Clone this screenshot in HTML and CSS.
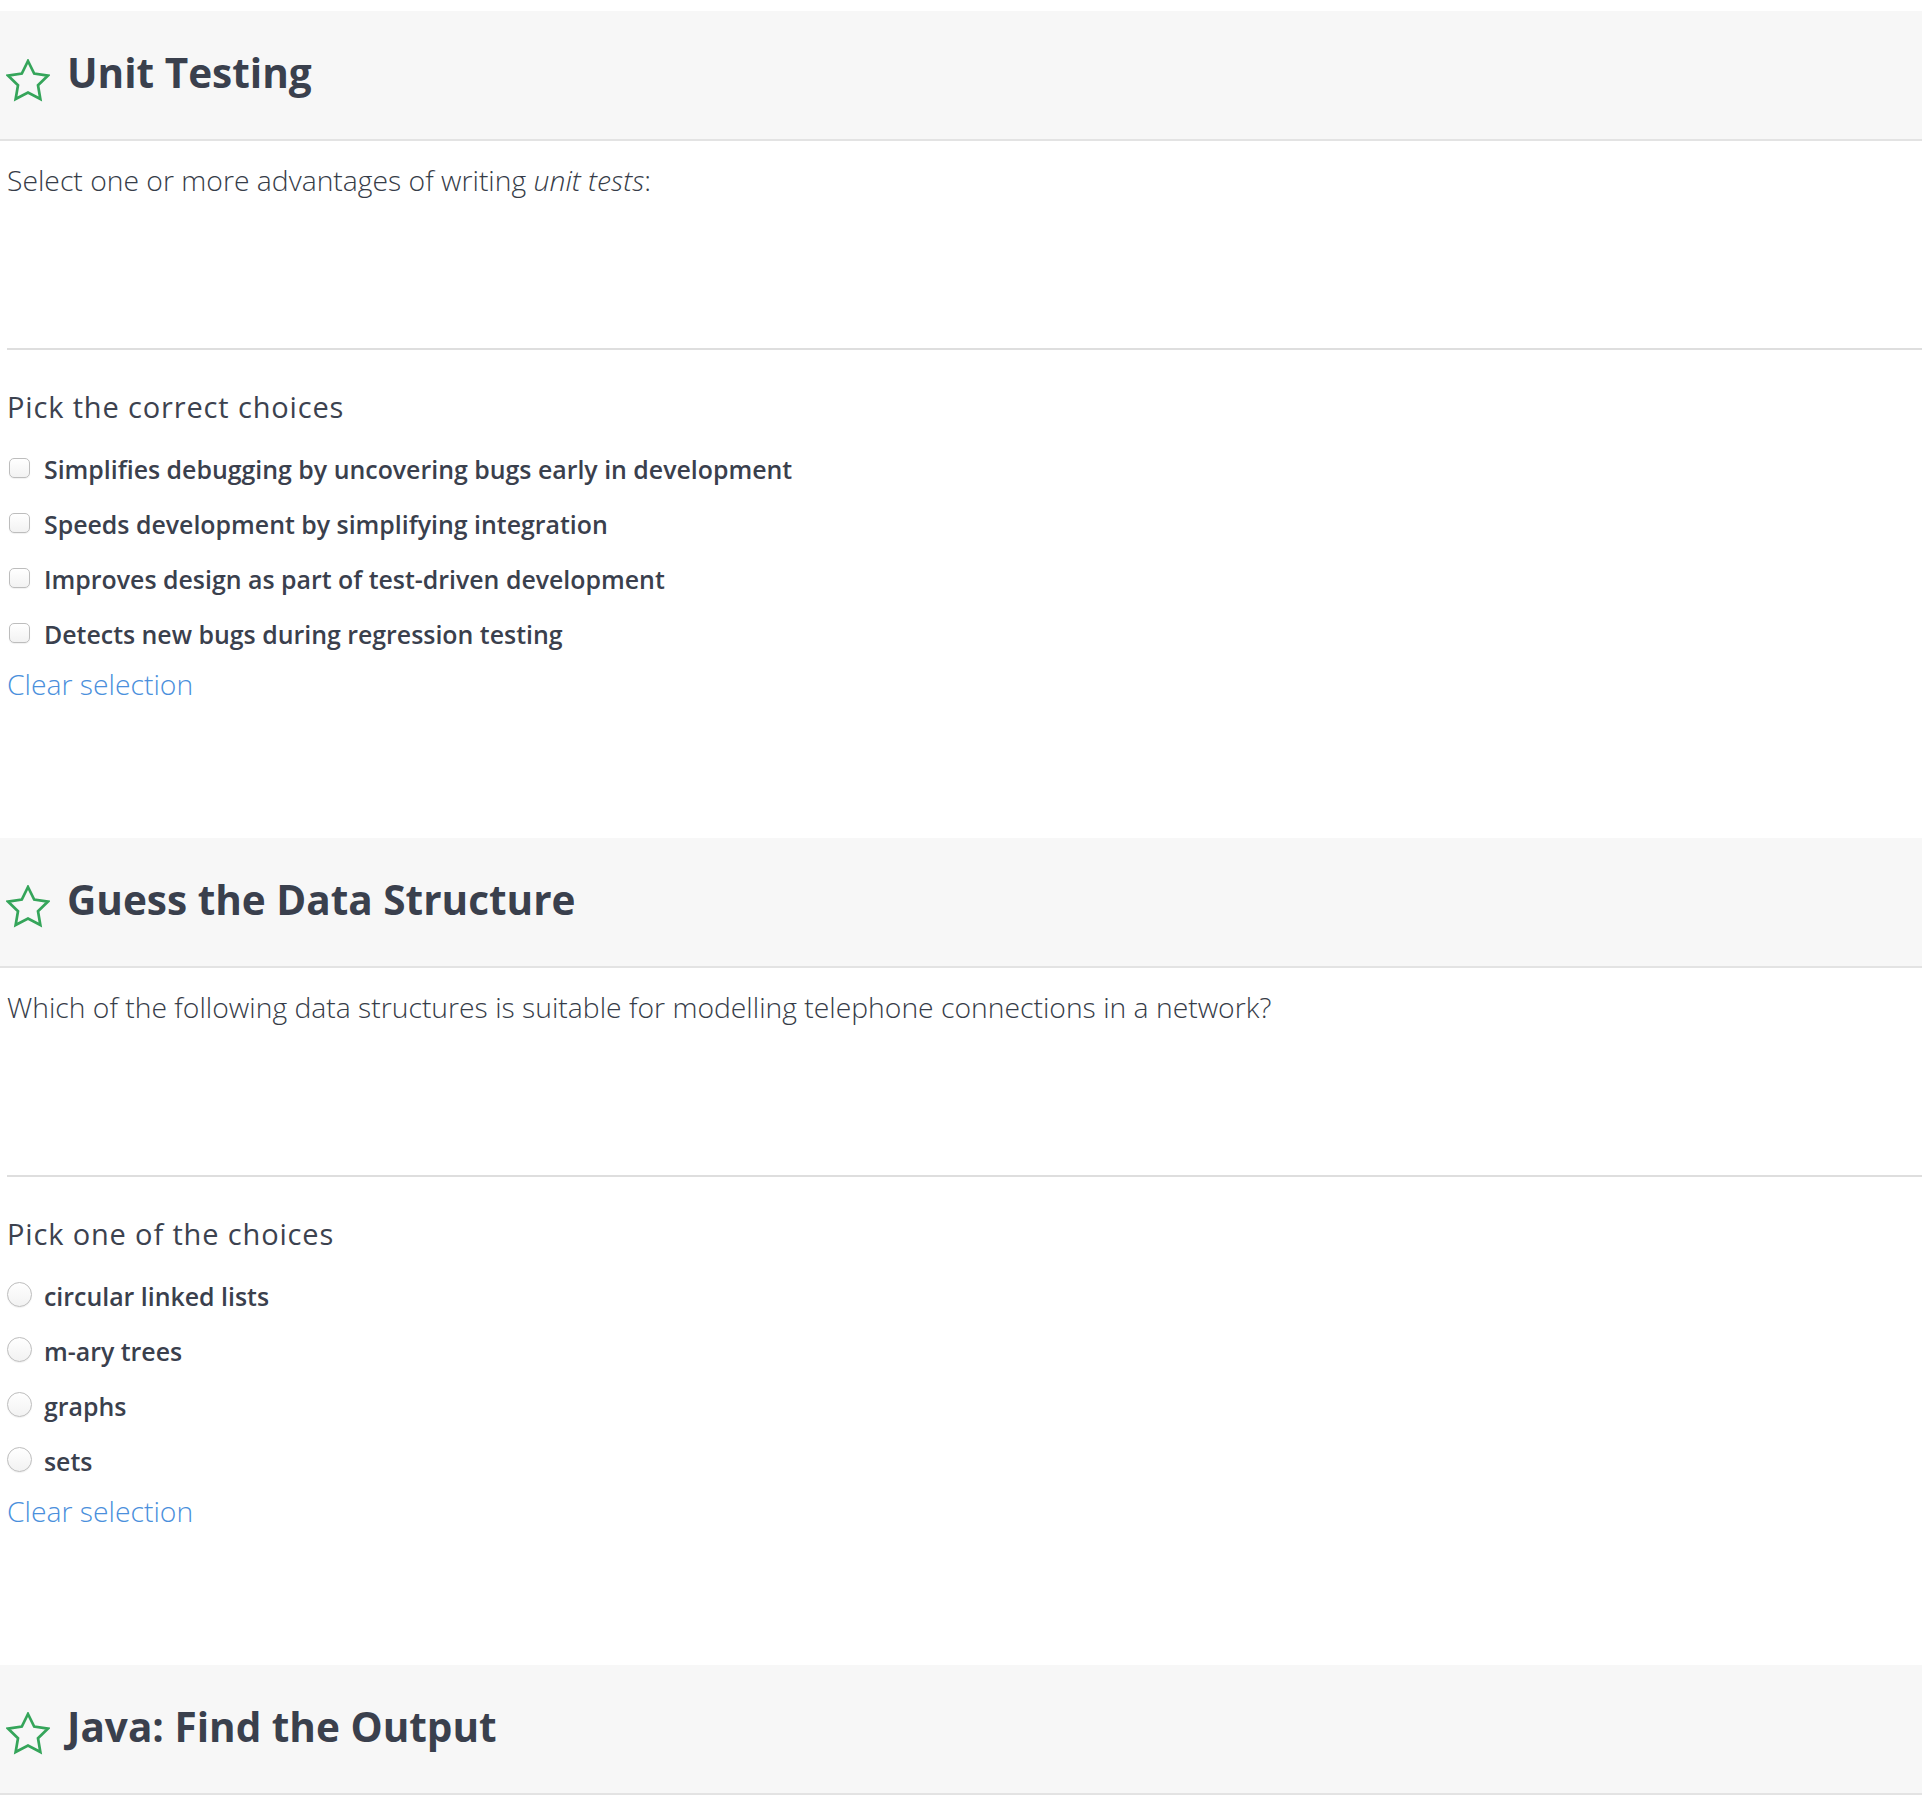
FILE: index.html
```html
<!DOCTYPE html>
<html lang="en">
<head>
<meta charset="utf-8">
<title>Quiz</title>
<link rel="stylesheet" href="styles.css">
</head>
<body>
<main class="page">

  <section class="challenge">
    <header class="ch-head">
      <svg class="star" viewBox="1 1 22 22" width="44" height="44" aria-hidden="true"><polygon points="12 2 15.09 8.26 22 9.27 17 14.14 18.18 21.02 12 17.77 5.82 21.02 7 14.14 2 9.27 8.91 8.26"/></svg>
      <h2 class="ch-title">Unit Testing</h2>
    </header>
    <div class="ch-body">
      <p class="question">Select one or more advantages of writing <em>unit tests</em>:</p>
      <div class="answers">
        <p class="pick">Pick the correct choices</p>
        <div class="options">
          <label class="opt"><span class="slot"><input type="checkbox" class="cb"></span><span class="opt-text">Simplifies debugging by uncovering bugs early in development</span></label>
          <label class="opt"><span class="slot"><input type="checkbox" class="cb"></span><span class="opt-text">Speeds development by simplifying integration</span></label>
          <label class="opt"><span class="slot"><input type="checkbox" class="cb"></span><span class="opt-text">Improves design as part of test-driven development</span></label>
          <label class="opt"><span class="slot"><input type="checkbox" class="cb"></span><span class="opt-text">Detects new bugs during regression testing</span></label>
        </div>
        <a class="clear" href="#">Clear selection</a>
      </div>
    </div>
  </section>

  <section class="challenge">
    <header class="ch-head">
      <svg class="star" viewBox="1 1 22 22" width="44" height="44" aria-hidden="true"><polygon points="12 2 15.09 8.26 22 9.27 17 14.14 18.18 21.02 12 17.77 5.82 21.02 7 14.14 2 9.27 8.91 8.26"/></svg>
      <h2 class="ch-title">Guess the Data Structure</h2>
    </header>
    <div class="ch-body">
      <p class="question">Which of the following data structures is suitable for modelling telephone connections in a network?</p>
      <div class="answers">
        <p class="pick">Pick one of the choices</p>
        <div class="options">
          <label class="opt"><span class="slot"><input type="radio" name="ds" class="rd"></span><span class="opt-text">circular linked lists</span></label>
          <label class="opt"><span class="slot"><input type="radio" name="ds" class="rd"></span><span class="opt-text">m-ary trees</span></label>
          <label class="opt"><span class="slot"><input type="radio" name="ds" class="rd"></span><span class="opt-text">graphs</span></label>
          <label class="opt"><span class="slot"><input type="radio" name="ds" class="rd"></span><span class="opt-text">sets</span></label>
        </div>
        <a class="clear" href="#">Clear selection</a>
      </div>
    </div>
  </section>

  <section class="challenge">
    <header class="ch-head">
      <svg class="star" viewBox="1 1 22 22" width="44" height="44" aria-hidden="true"><polygon points="12 2 15.09 8.26 22 9.27 17 14.14 18.18 21.02 12 17.77 5.82 21.02 7 14.14 2 9.27 8.91 8.26"/></svg>
      <h2 class="ch-title">Java: Find the Output</h2>
    </header>
  </section>

</main>
</body>
</html>
```
FILE: styles.css
```css
* { box-sizing: border-box; }

html, body {
  margin: 0;
  padding: 0;
  background: #ffffff;
}

body {
  font-family: "Open Sans", "Liberation Sans", sans-serif;
  color: #3c424f;
}

.page {
  padding-top: 11px;
  display: flex;
  flex-direction: column;
}

.challenge {
  display: flex;
  flex-direction: column;
  padding-bottom: 134px;
}

.ch-head {
  height: 130px;
  background: #f7f7f7;
  border-bottom: 2px solid #e3e3e3;
  display: flex;
  align-items: flex-start;
  padding: 35px 0 0 6px;
  gap: 17px;
}

.star {
  flex: none;
  margin-top: 12.5px;
  fill: none;
  stroke: #35a55a;
  stroke-width: 1.35;
  stroke-linejoin: miter;
}

.ch-title {
  margin: 0;
  font-size: 40.5px;
  line-height: 54px;
  font-weight: 700;
  color: #3a404d;
}

.ch-body {
  padding-left: 7px;
}

.question {
  margin: 0;
  height: 209px;
  padding-top: 19px;
  font-size: 28.3px;
  line-height: 40px;
  font-weight: 300;
  color: #363c48;
  border-bottom: 2px solid #dedede;
}

.question em {
  font-style: italic;
}

.answers {
  display: flex;
  flex-direction: column;
  align-items: flex-start;
  padding-top: 37px;
}

.pick {
  margin: 0;
  font-size: 29px;
  line-height: 40px;
  letter-spacing: 0.85px;
  font-weight: 400;
  color: #3c424f;
}

.options {
  display: flex;
  flex-direction: column;
  gap: 21px;
  margin-top: 25.4px;
  margin-left: -1px;
}

.opt {
  display: flex;
  align-items: flex-start;
  gap: 12px;
  font-size: 24.9px;
  line-height: 34px;
  font-weight: 600;
  color: #3a404d;
}

.slot {
  flex: none;
  width: 26px;
  height: 34px;
  display: flex;
  justify-content: center;
  align-items: flex-start;
}

.cb, .rd {
  appearance: none;
  -webkit-appearance: none;
  margin: 0;
  border: 1.5px solid #bdbdbd;
  background: linear-gradient(#ffffff, #f2f2f2);
  box-shadow: 0 1px 1px rgba(0,0,0,0.06);
}

.cb {
  width: 21px;
  height: 20px;
  border-radius: 5px;
  margin-top: 5.6px;
}

.rd {
  width: 25px;
  height: 25px;
  border-radius: 50%;
  margin-top: 2.6px;
}

.clear {
  margin-top: 12.6px;
  font-size: 28.3px;
  line-height: 40px;
  font-weight: 300;
  color: #4a8fdc;
  text-decoration: none;
}
```
